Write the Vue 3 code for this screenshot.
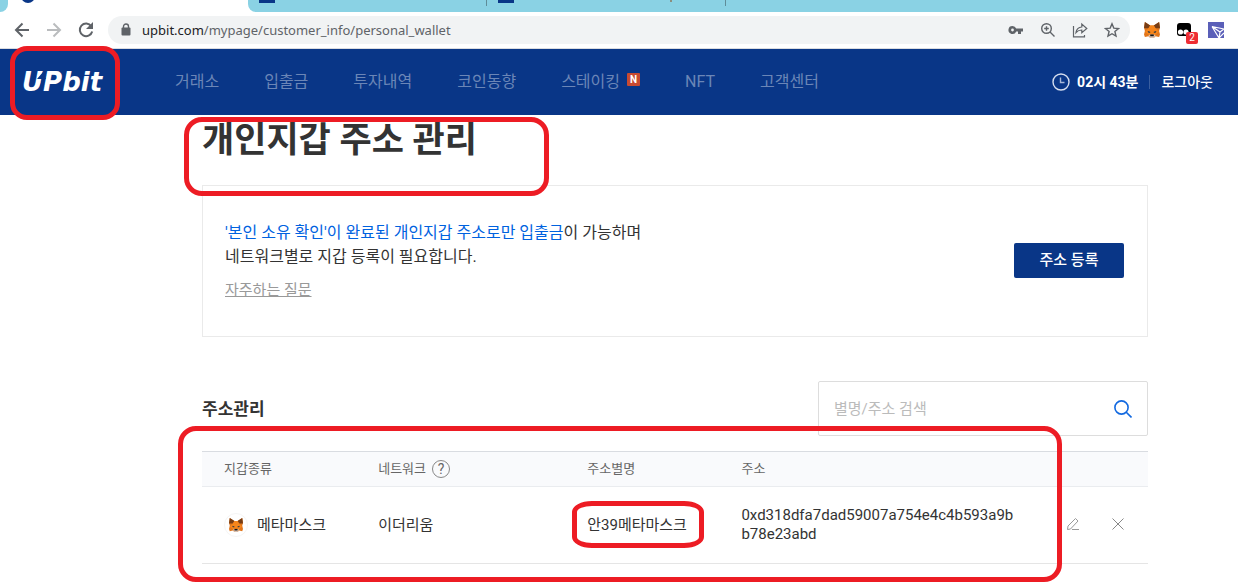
<script setup>
import { ref, h } from 'vue'

const menu = [
  { label: '거래소' },
  { label: '입출금' },
  { label: '투자내역' },
  { label: '코인동향' },
  { label: '스테이킹', isNew: true },
  { label: 'NFT' },
  { label: '고객센터' },
]

const wallets = [
  {
    kind: '메타마스크',
    network: '이더리움',
    alias: '안39메타마스크',
    address: '0xd318dfa7dad59007a754e4c4b593a9bb78e23abd',
  },
]

const query = ref('')

const foxShapes = [
  ['#e2761b', 'M1 0 7 4h4l6-4 1 6-1 4 1 4-1 3-4-1-2 2H7l-2-2-4 1-1-3 1-4-1-4z'],
  ['#763d16', 'M1 0 7 4 5 7 0 7zM17 0l-6 4 2 3 5 0z'],
  ['#f6851b', 'M5 7 7 4h4l2 3 4 4-4 3-2 2H7l-2-2-4-3z'],
  ['#233447', 'M4 10l3 1v1H5zM14 10l-3 1v1h2z'],
  ['#d7c1b3', 'M5 15l2-1h4l2 1-2 3H7z'],
  ['#161616', 'M7 14h4v2H7z'],
]
const FoxIcon = () =>
  h(
    'svg',
    { viewBox: '0 0 18 18', 'aria-hidden': 'true' },
    foxShapes.map(([fill, d]) => h('path', { fill, d })),
  )
</script>

<template>
  <div class="window">
    <div class="tabs">
      <div class="tab-edge"></div>
      <div class="tab-active"><span class="fav-round"></span></div>
      <div class="tab-rest">
        <div class="tab"><span class="fav"></span></div>
        <div class="tab"><span class="fav"></span><span class="sliver"></span></div>
      </div>
    </div>

    <div class="toolbar">
      <button class="tool" aria-label="뒤로">
        <svg width="16" height="16" viewBox="0 0 16 16" fill="none" stroke="#5f6368" stroke-width="2"><path d="M15 8H2M8.500 1.500 2 8l6.500 6.500" /></svg>
      </button>
      <button class="tool" aria-label="앞으로">
        <svg width="16" height="16" viewBox="0 0 16 16" fill="none" stroke="#babcbe" stroke-width="2"><path d="M1 8h13M7.500 1.500 14 8l-6.500 6.500" /></svg>
      </button>
      <button class="tool" aria-label="새로고침">
        <svg width="16" height="16" viewBox="0 0 16 16"><path d="M13.300 4.300A6.300 6.300 0 1 0 14.200 9.500" fill="none" stroke="#5f6368" stroke-width="2" /><path d="M15 0v7H8z" fill="#5f6368" /></svg>
      </button>
      <div class="address">
        <svg class="lock" width="10" height="14" viewBox="0 0 10 14"><rect x="0.500" y="4.500" width="9" height="8" rx="1" fill="#5f6368" /><path d="M2.500 5V3.500a2.500 2.500 0 0 1 5 0V5" fill="none" stroke="#5f6368" stroke-width="1.400" /></svg>
        <span class="url"><b>upbit.com</b>/mypage/customer_info/personal_wallet</span>
        <div class="address-tools">
          <button class="tool" aria-label="비밀번호">
            <svg width="16" height="16" viewBox="0 0 16 16"><path d="M4.500 4a4 4 0 1 0 3.700 5.400H10V12h3V9.400h2V6.600H8.200A4 4 0 0 0 4.500 4zm0 2.600a1.400 1.400 0 1 1 0 2.800 1.400 1.400 0 0 1 0-2.800z" fill="#5f6368" fill-rule="evenodd" /></svg>
          </button>
          <button class="tool" aria-label="확대">
            <svg width="16" height="16" viewBox="0 0 16 16" fill="none" stroke="#5f6368" stroke-width="1.400"><circle cx="6.500" cy="6.500" r="4.800" /><path d="M10 10l4.500 4.500M6.500 4.200v4.600M4.200 6.500h4.600" /></svg>
          </button>
          <button class="tool" aria-label="공유">
            <svg width="16" height="16" viewBox="0 0 16 16" fill="none" stroke="#5f6368" stroke-width="1.200"><path d="M1.500 4v10.800h11V13M4 10.500C4.500 7 6.500 5.200 9.800 5V2l5 4.500-5 4.300V8C7 8 5.500 8.800 4 10.500z" /></svg>
          </button>
          <button class="tool" aria-label="북마크">
            <svg width="16" height="16" viewBox="0 0 16 16" fill="none" stroke="#5f6368" stroke-width="1.400"><path d="M8 1.800l1.800 4.300 4.700.400-3.600 3 1.100 4.600L8 11.700l-4 2.400 1.100-4.600-3.600-3 4.700-.400z" /></svg>
          </button>
        </div>
      </div>
      <div class="extensions">
        <button class="tool fox" aria-label="MetaMask"><FoxIcon /></button>
        <button class="tool ext" aria-label="알림 2">
          <svg width="16" height="16" viewBox="0 0 16 16"><path d="M4 1h8q3 0 3 3v8q0 2-3 2H4q-3 0-3-3V4q0-3 3-3z" fill="#000" /><circle cx="4.500" cy="10" r="2.600" fill="#fff" /><circle cx="10" cy="10" r="2.600" fill="#fff" /></svg>
          <span class="count">2</span>
        </button>
        <button class="tool" aria-label="TronLink">
          <svg width="16" height="16" viewBox="0 0 16 16" fill="none"><path fill="#5a5fb8" d="M0 0h16v16H0z" /><path d="M4 4.500 16 7M4 4.500 11 16M4 4.500l8 5.500 4-3M12 10l-1 6M16 11l-5 5" stroke="#fff" stroke-width="1.200" /></svg>
        </button>
      </div>
    </div>

    <header class="header">
      <a class="logo" href="#">UPbit<svg class="logo-arrow" width="10" height="19" viewBox="0 0 10 19"><path d="M0 7 6 0l3 7H7L4 19H2L5 7z" fill="#093687" /></svg></a>
      <nav class="menu">
        <a v-for="item in menu" :key="item.label" href="#">{{ item.label }}<span v-if="item.isNew" class="new">N</span></a>
      </nav>
      <div class="session">
        <svg width="18" height="18" viewBox="0 0 18 18" fill="none" stroke="#d5deef"><circle cx="9" cy="9" r="8" stroke-width="1.400" /><path d="M8.500 4.500V9.500H12.500" stroke="#a9b9d9" stroke-width="1.400" /></svg>
        <strong>02시 43분</strong>
        <a href="#">로그아웃</a>
      </div>
    </header>

    <main class="content">
      <h1>개인지갑 주소 관리</h1>

      <section class="notice">
        <div>
          <p><em>'본인 소유 확인'이 완료된 개인지갑 주소로만 입출금</em>이 가능하며<br />네트워크별로 지갑 등록이 필요합니다.</p>
          <a class="faq" href="#">자주하는 질문</a>
        </div>
        <button class="register">주소 등록</button>
      </section>

      <div class="list-head">
        <h2>주소관리</h2>
        <form class="search" @submit.prevent>
          <input v-model="query" type="text" placeholder="별명/주소 검색" aria-label="별명/주소 검색" />
          <button aria-label="검색">
            <svg width="18" height="18" viewBox="0 0 18 18" fill="none" stroke="#1269e0" stroke-width="1.600"><circle cx="7.500" cy="7.500" r="6.600" /><path d="M12 12l5.500 5.500" /></svg>
          </button>
        </form>
      </div>

      <table>
        <thead>
          <tr>
            <th class="c-kind">지갑종류</th>
            <th class="c-net"><span class="with-help">네트워크<button class="help" aria-label="도움말">?</button></span></th>
            <th class="c-alias">주소별명</th>
            <th class="c-addr">주소</th>
            <th class="c-act"></th>
          </tr>
        </thead>
        <tbody>
          <tr v-for="w in wallets" :key="w.address">
            <td><span class="kind"><span class="coin"><FoxIcon /></span>{{ w.kind }}</span></td>
            <td>{{ w.network }}</td>
            <td>{{ w.alias }}</td>
            <td class="hash">{{ w.address }}</td>
            <td class="c-act">
              <div class="actions">
                <button aria-label="수정">
                  <svg width="14" height="14" viewBox="0 0 14 14" fill="none" stroke="#999"><path d="M1.500 12.500 2 9 9.500 1.500l2.500 2.500L4.500 12zM6 12.500h7" /></svg>
                </button>
                <button aria-label="삭제">
                  <svg width="14" height="14" viewBox="0 0 14 14" fill="none" stroke="#888"><path d="M1.500 1.500l11 11M12.500 1.500l-11 11" /></svg>
                </button>
              </div>
            </td>
          </tr>
        </tbody>
      </table>
    </main>

    <div class="mark mark-logo"></div>
    <div class="mark mark-title"></div>
    <div class="mark mark-table"></div>
    <div class="mark mark-alias"></div>
  </div>
</template>

<style>
body {
  margin: 0;
  background: #fff;
}
</style>

<style scoped>
* {
  box-sizing: border-box;
}
.window {
  position: relative;
  font-family: Roboto, "Noto Sans CJK KR", sans-serif;
  font-size: 15px;
  line-height: 20px;
  color: #333;
  overflow: hidden;
  min-height: 100vh;
}
button {
  padding: 0;
  border: 0;
  background: none;
  font: inherit;
  color: inherit;
}
a {
  color: inherit;
  text-decoration: none;
}
svg {
  display: block;
}

/* browser frame */
.tabs {
  display: flex;
  height: 12px;
}
.tab-edge {
  width: 8px;
  background: #8ad2e4;
  border-bottom-right-radius: 8px;
}
.tab-active {
  width: 240px;
  padding-left: 13px;
  overflow: hidden;
}
.fav-round {
  display: block;
  width: 14px;
  height: 14px;
  margin-top: -11px;
  border-radius: 50%;
  background: #093687;
}
.tab-rest {
  display: flex;
  flex: 1;
  background: #8ad2e4;
  border-bottom-left-radius: 8px;
}
.tab {
  display: flex;
  width: 239px;
  height: 6px;
  padding-left: 11px;
  border-right: 1px solid #5f8d99;
}
.fav {
  width: 16px;
  height: 3px;
  background: #093687;
}
.sliver {
  width: 2px;
  height: 2px;
  margin: 0 53px 0 auto;
  background: #8a8f80;
}
.toolbar {
  display: flex;
  align-items: center;
  gap: 16px;
  height: 37px;
  padding: 0 14px;
  border-bottom: 1px solid #dadce0;
}
.tool {
  position: relative;
  flex: none;
  width: 16px;
  height: 16px;
}
.address {
  display: flex;
  flex: 1;
  align-items: center;
  height: 28px;
  margin-right: 6px;
  margin-left: -2px;
  padding: 0 10px 0 13px;
  border-radius: 14px;
  background: #f1f3f4;
}
.url {
  margin-left: 11px;
  font-family: "Noto Sans", "Open Sans", sans-serif;
  font-size: 13px;
  color: #5f6368;
}
.url b {
  font-weight: 400;
  color: #202124;
}
.address-tools {
  display: flex;
  gap: 16px;
  margin-left: auto;
}
.extensions {
  display: flex;
  gap: 16px;
  margin-left: -8px;
}
.count {
  position: absolute;
  left: 10px;
  top: 10px;
  width: 12px;
  height: 12px;
  border-radius: 2px;
  background: #ee2d33;
  color: #fff;
  font-size: 10px;
  line-height: 12px;
  text-align: center;
}

/* site header */
.header {
  display: flex;
  align-items: center;
  height: 66px;
  padding: 0 25px 0 22px;
  background: #093687;
  color: #fff;
}
.logo {
  position: relative;
  width: 153px;
  font-family: "DejaVu Sans", sans-serif;
  font-size: 26px;
  font-style: italic;
  font-weight: 700;
  line-height: 30px;
}
.logo-arrow {
  position: absolute;
  left: 15px;
  top: 5px;
}
.menu {
  display: flex;
  gap: 45px;
  font-size: 16px;
  color: #6b86b7;
}
.menu a {
  display: flex;
}
.new {
  width: 13px;
  height: 13px;
  margin: 1px 0 0 7px;
  border-radius: 1px;
  background: #c84a31;
  color: #fff;
  font-size: 10px;
  font-weight: 700;
  line-height: 13px;
  text-align: center;
}
.session {
  display: flex;
  align-items: center;
  margin-left: auto;
  font-size: 14px;
  font-weight: 500;
}
.session strong {
  margin-left: 7px;
  font-weight: 700;
}
.session a {
  margin-left: 11px;
  padding-left: 11px;
  border-left: 1px solid #3a5e9f;
  line-height: 14px;
}

/* page */
.content {
  padding: 0 90px 23px 202px;
}
h1 {
  margin: 0;
  height: 70px;
  font-size: 35px;
  font-weight: 700;
  line-height: 52px;
}
.notice {
  display: flex;
  align-items: center;
  justify-content: space-between;
  height: 152px;
  padding: 0 23px 2px 22px;
  border: 1px solid #eaeaea;
}
.notice p {
  margin: 0 0 11px;
  font-size: 16px;
  line-height: 24px;
}
.notice em {
  font-style: normal;
  color: #0062df;
}
.faq {
  color: #999;
  text-decoration: underline;
}
.register {
  width: 110px;
  height: 35px;
  border-radius: 2px;
  background: #093687;
  color: #fff;
  font-weight: 500;
}
.list-head {
  display: flex;
  align-items: center;
  justify-content: space-between;
  margin: 44px 0 15px;
}
h2 {
  margin: 0;
  font-size: 17px;
  font-weight: 700;
}
.search {
  display: flex;
  align-items: center;
  width: 330px;
  height: 55px;
  padding: 0 15px;
  border: 1px solid #ddd;
  border-radius: 2px;
}
.search input {
  flex: 1;
  min-width: 0;
  padding: 0;
  border: 0;
  outline: 0;
  background: none;
  font: inherit;
  color: #333;
}
.search input::placeholder {
  color: #bbb;
}
table {
  width: 100%;
  table-layout: fixed;
  border-collapse: collapse;
}
th {
  height: 35px;
  padding: 0 0 0 22px;
  border-top: 1px solid #d9dce1;
  border-bottom: 1px solid #eaecef;
  background: #f9fafc;
  font-size: 13px;
  font-weight: 400;
  text-align: left;
  color: #666;
}
td {
  height: 77px;
  padding: 0 0 0 22px;
  border-bottom: 1px solid #e5e5e5;
}
.c-kind,
.c-alias {
  width: 16.3%;
}
.c-net {
  width: 22.1%;
}
.c-addr {
  width: 34.9%;
}
.with-help,
.kind {
  display: flex;
  align-items: center;
}
.help {
  width: 18px;
  height: 18px;
  margin-left: 6px;
  border: 1px solid #888;
  border-radius: 50%;
  font-size: 14px;
  line-height: 16px;
}
.coin {
  width: 24px;
  height: 24px;
  margin-right: 9px;
  padding: 4px;
  border: 1px solid #f5f5f5;
  border-radius: 50%;
}
td.hash {
  padding-right: 32px;
  line-height: 19px;
  word-break: break-all;
}
th.c-act,
td.c-act {
  padding-left: 0;
}
.actions {
  display: flex;
  justify-content: space-between;
  padding: 0 23px 2px 16px;
}

/* highlight frames */
.mark {
  position: absolute;
  border: 5px solid #ed1c24;
  pointer-events: none;
}
.mark-logo {
  left: 10px;
  top: 46px;
  width: 110px;
  height: 74px;
  border-radius: 17px;
}
.mark-title {
  left: 184px;
  top: 117px;
  width: 365px;
  height: 79px;
  border-radius: 18px;
}
.mark-table {
  left: 178px;
  top: 426px;
  width: 884px;
  height: 156px;
  border-radius: 18px;
}
.mark-alias {
  left: 572px;
  top: 501px;
  width: 132px;
  height: 47px;
  border-radius: 20px / 11px;
}
</style>
